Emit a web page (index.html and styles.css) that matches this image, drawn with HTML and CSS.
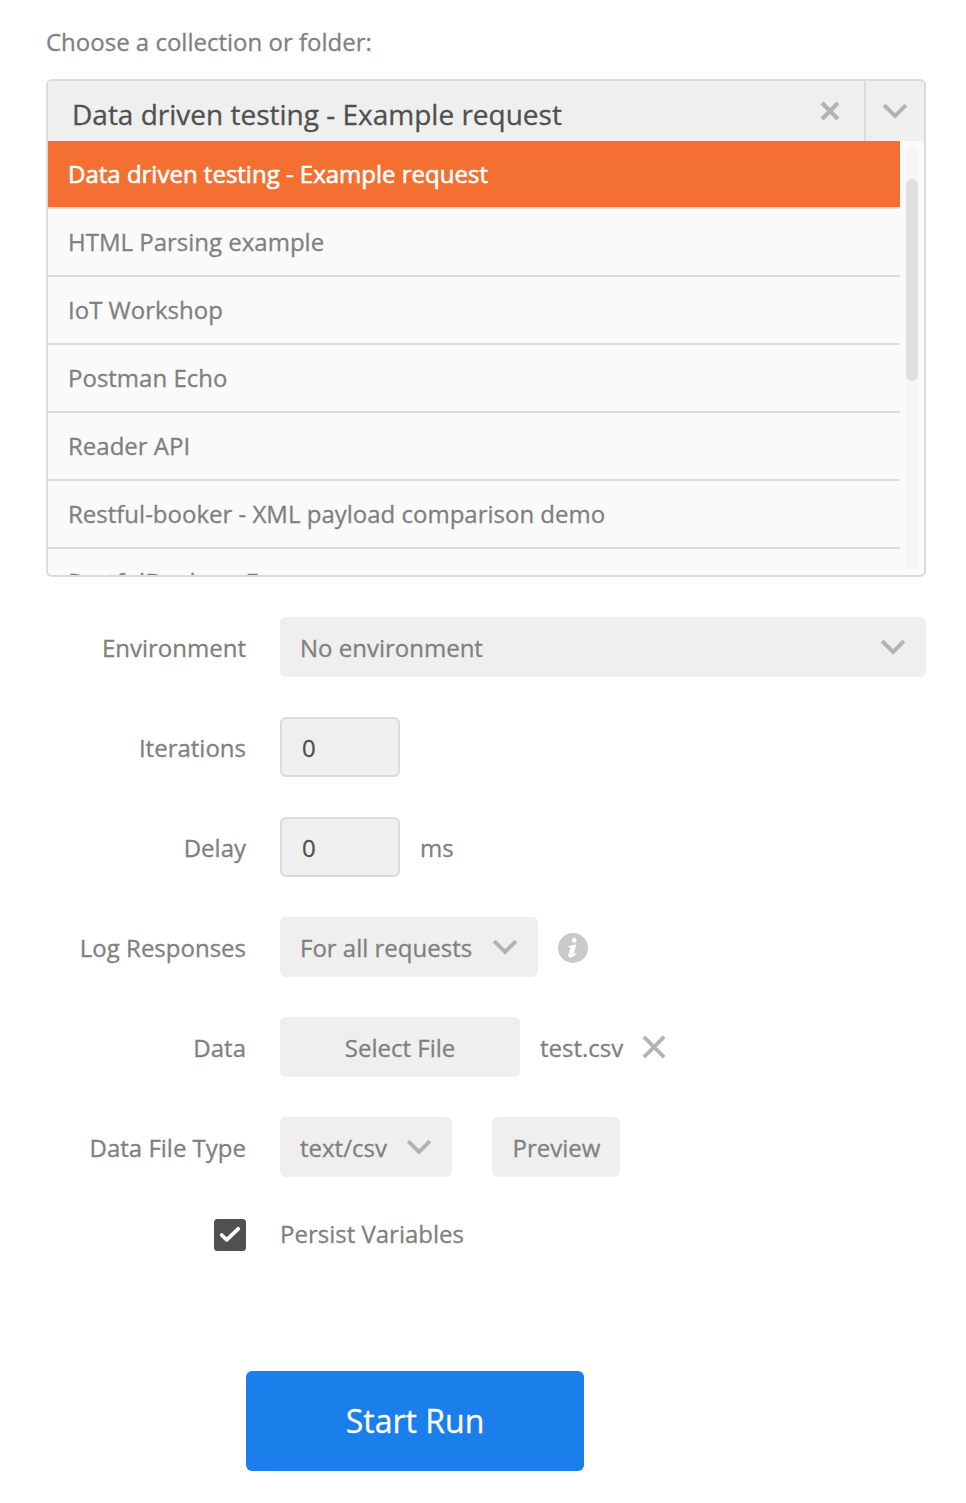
FILE: index.html
```html
<!DOCTYPE html>
<html lang="en">
<head>
<meta charset="utf-8">
<title>Collection Runner</title>
<link rel="stylesheet" href="styles.css">
</head>
<body>
<main class="runner">
  <div class="heading">Choose a collection or folder:</div>
  <section class="picker">
    <div class="picker-head">
      <span class="picker-value">Data driven testing - Example request</span>
      <svg class="clear" width="20" height="20" viewBox="0 0 20 20"><path d="M2.1 2.1 17.9 17.9M17.9 2.1 2.1 17.9"/></svg>
      <div class="picker-toggle"><svg class="chevron" width="26" height="16" viewBox="0 0 26 16"><path d="M2.1 2.1 13 13 23.9 2.1"/></svg></div>
    </div>
    <div class="picker-body">
      <ul class="options">
        <li class="option selected">Data driven testing - Example request</li>
        <li class="option">HTML Parsing example</li>
        <li class="option">IoT Workshop</li>
        <li class="option">Postman Echo</li>
        <li class="option">Reader API</li>
        <li class="option">Restful-booker - XML payload comparison demo</li>
        <li class="option">RestfulBooker - Exam</li>
      </ul>
      <div class="track"><div class="thumb"></div></div>
    </div>
  </section>
  <form class="settings">
    <div class="row">
      <label class="label">Environment</label>
      <div class="select wide">No environment<svg class="chevron" width="26" height="16" viewBox="0 0 26 16"><path d="M2.1 2.1 13 13 23.9 2.1"/></svg></div>
    </div>
    <div class="row">
      <label class="label">Iterations</label>
      <div class="input">0</div>
    </div>
    <div class="row">
      <label class="label">Delay</label>
      <div class="input">0</div>
      <span class="note">ms</span>
    </div>
    <div class="row">
      <label class="label">Log Responses</label>
      <div class="select log">For all requests<svg class="chevron" width="26" height="16" viewBox="0 0 26 16"><path d="M2.1 2.1 13 13 23.9 2.1"/></svg></div>
      <svg class="info" width="30" height="30" viewBox="0 0 30 30"><circle cx="15" cy="15" r="15"/><circle class="mark" cx="16.2" cy="7.4" r="2.3"/><path class="mark" d="M10 13.4C12.6 12.4 15 11.8 18.2 11.5L15.6 20.9C16 21.2 16.8 20.6 17.7 19.8L18.4 20.5C16.2 23.2 14.2 24.5 12.1 24.5C10.5 24.5 9.8 23.4 10.3 21.8L12.4 14.7C11.7 14.3 11 14.3 10 14.5Z"/></svg>
    </div>
    <div class="row">
      <label class="label">Data</label>
      <div class="button file">Select File</div>
      <span class="note">test.csv</span>
      <svg class="remove" width="24" height="24" viewBox="0 0 24 24"><path d="M1.9 1.9 22.1 22.1M22.1 1.9 1.9 22.1"/></svg>
    </div>
    <div class="row">
      <label class="label">Data File Type</label>
      <div class="select type">text/csv<svg class="chevron" width="26" height="16" viewBox="0 0 26 16"><path d="M2.1 2.1 13 13 23.9 2.1"/></svg></div>
      <div class="button preview">Preview</div>
    </div>
    <div class="row persist">
      <div class="check-cell"><svg class="check" width="32" height="32" viewBox="0 0 32 32"><rect width="32" height="32" rx="3.5"/><path d="M7.7 16 12.7 20.8 24.2 9.8"/></svg></div>
      <span class="persist-text">Persist Variables</span>
    </div>
  </form>
  <div class="start">Start Run</div>
</main>
</body>
</html>
```

FILE: styles.css
```css
* { box-sizing: border-box; }
body {
  margin: 0;
  background: #fff;
  color: #808080;
  font: 24px/32px "Open Sans", sans-serif;
  -webkit-text-stroke: 0.3px currentColor;
}
svg { display: block; flex: none; fill: none; }
.runner { width: 966px; height: 1503px; padding: 26px 40px 0 46px; }
.heading { height: 53px; }
.picker {
  height: 498px;
  border: 2px solid #dbdbdb;
  border-radius: 6px;
  overflow: hidden;
  background: #fafafa;
}
.picker-head { display: flex; align-items: center; height: 60px; background: #efefef; }
.picker-value {
  flex: 1;
  padding: 6px 0 0 24px;
  color: #505050;
  font-size: 28px;
}
.clear { margin-right: 24px; stroke: #b3b3b3; stroke-width: 4.2; }
.picker-toggle {
  display: flex;
  align-items: center;
  justify-content: center;
  width: 60px;
  height: 60px;
  border-left: 2px solid #dbdbdb;
}
.chevron { stroke: #b3b3b3; stroke-width: 4; }
.picker-body { display: flex; height: 434px; }
.options { width: 852px; margin: 0; padding: 0; list-style: none; }
.option {
  height: 68px;
  padding-left: 20px;
  border-bottom: 2px solid #dbdbdb;
  line-height: 66px;
  white-space: nowrap;
}
.selected { background: #f37032; color: #fff; -webkit-text-stroke-width: 0.6px; }
.track {
  width: 12px;
  height: 422px;
  margin: 6px;
  padding-top: 32px;
  border-radius: 6px;
  background: #f5f5f5;
}
.thumb { height: 202px; border-radius: 6px; background: #e0e0e0; }
.settings { display: flex; flex-direction: column; gap: 40px; margin-top: 40px; }
.row { display: flex; align-items: center; height: 60px; }
.label, .check-cell { display: flex; justify-content: flex-end; width: 200px; margin-right: 34px; white-space: nowrap; }
.label { padding-top: 2px; }
.select, .input, .button {
  display: flex;
  align-items: center;
  height: 60px;
  padding-top: 2px;
  border-radius: 6px;
  background: #efefef;
  white-space: nowrap;
}
.select { justify-content: space-between; padding: 2px 20px 0; }
.select .chevron { margin-top: -2px; }
.wide { width: 646px; }
.log { width: 258px; }
.type { width: 172px; }
.input { width: 120px; padding-left: 20px; border: 2px solid #dbdbdb; color: #505050; }
.button { justify-content: center; }
.file { width: 240px; }
.preview { width: 128px; margin-left: 40px; padding-left: 1px; }
.note { margin-left: 20px; padding-top: 2px; }
.info { margin: 2px 0 0 20px; fill: #c9c9c9; }
.mark { fill: #fff; }
.remove { margin-left: 19px; stroke: #b3b3b3; stroke-width: 3.8; }
.persist { height: 36px; }
.check rect { fill: #505050; }
.check path { stroke: #fff; stroke-width: 3.8; stroke-linecap: round; stroke-linejoin: round; }
.persist-text { padding-bottom: 3px; }
.start {
  width: 338px;
  height: 100px;
  margin: 118px 0 0 200px;
  border-radius: 6px;
  background: #1a7eeb;
  color: #fff;
  font-size: 32px;
  line-height: 100px;
  text-align: center;
}
```
